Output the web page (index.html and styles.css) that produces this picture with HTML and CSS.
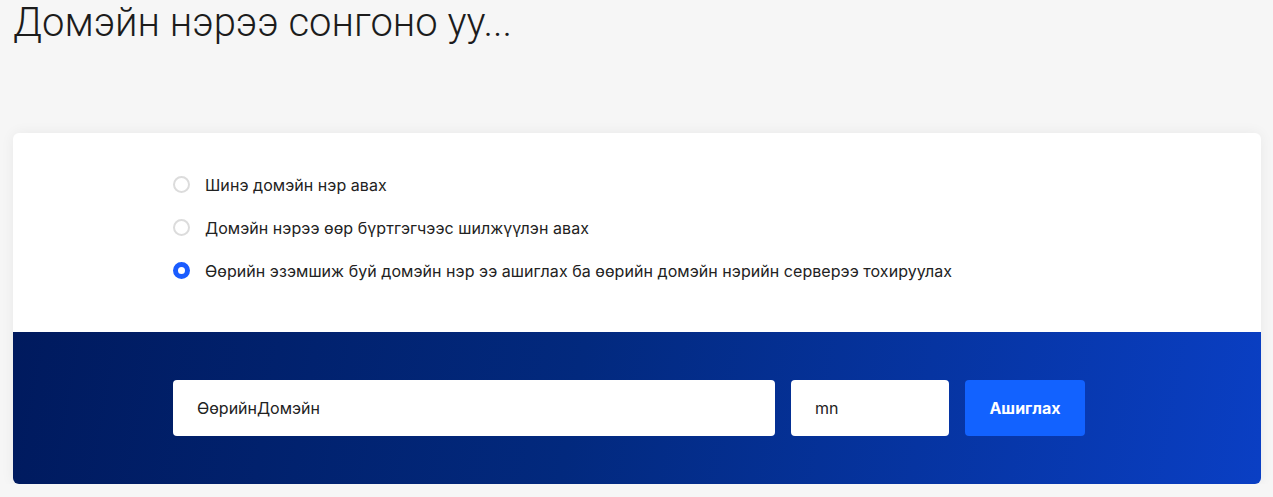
FILE: index.html
```html
<!DOCTYPE html>
<html lang="mn">
<head>
    <meta charset="UTF-8">
    <meta name="viewport" content="width=device-width, initial-scale=1.0">
    <title>Домэйн</title>
    <link rel="stylesheet" href="styles.css">
</head>
<body>
    <h1 class="page-title">Домэйн нэрээ сонгоно уу...</h1>

    <div class="domain-card">
        <div class="options">
            <label class="option">
                <input type="radio" name="domainType" value="new">
                <span>Шинэ домэйн нэр авах</span>
            </label>
            <label class="option">
                <input type="radio" name="domainType" value="transfer">
                <span>Домэйн нэрээ өөр бүртгэгчээс шилжүүлэн авах</span>
            </label>
            <label class="option">
                <input type="radio" name="domainType" value="own" checked>
                <span>Өөрийн эзэмшиж буй домэйн нэр ээ ашиглах ба өөрийн домэйн нэрийн серверээ тохируулах</span>
            </label>
        </div>
        <div class="domain-form">
            <input class="field field-name" type="text" value="ӨөрийнДомэйн">
            <input class="field field-tld" type="text" value="mn">
            <button class="use-btn">Ашиглах</button>
        </div>
    </div>
</body>
</html>
```
FILE: styles.css
```css
body {
    margin: 0;
    padding: 0 12px 0 13px;
    background-color: #f6f6f6;
    font-family: Inter, "Noto Sans", sans-serif;
    color: #222;
}

.page-title {
    margin: 0;
    padding-top: 2px;
    height: 131px;
    font-family: Roboto, sans-serif;
    font-weight: 300;
    font-size: 40px;
    line-height: 42px;
    color: #1c1c1c;
}

.domain-card {
    background-color: #fff;
    border-radius: 6px;
    box-shadow: 0 0 14px rgba(0, 0, 0, 0.06);
    overflow: hidden;
}

.options {
    height: 199px;
    box-sizing: border-box;
    padding: 30px 0 0 160px;
}

.option {
    display: flex;
    align-items: center;
    height: 43px;
    font-size: 16px;
    letter-spacing: 0.05px;
    cursor: pointer;
}

.option input {
    appearance: none;
    -webkit-appearance: none;
    width: 17px;
    height: 17px;
    margin: 0 15px 0 0;
    border: 2px solid #dcdcdc;
    border-radius: 50%;
    box-sizing: border-box;
    background: #fff;
}

.option input:checked {
    border: 5px solid #1a5cff;
}

.domain-form {
    height: 152px;
    box-sizing: border-box;
    padding: 48px 0 0 160px;
    display: flex;
    align-items: flex-start;
    gap: 16px;
    background: linear-gradient(100deg, #001a5e 0%, #02297e 45%, #0a3fc4 100%);
}

.field {
    height: 56px;
    box-sizing: border-box;
    border: none;
    border-radius: 4px;
    padding: 0 24px;
    font-family: inherit;
    font-size: 16px;
    color: #222;
    outline: none;
}

.field-name {
    width: 602px;
}

.field-tld {
    width: 158px;
}

.use-btn {
    width: 120px;
    height: 56px;
    border: none;
    border-radius: 4px;
    background-color: #1262ff;
    color: #fff;
    font-family: inherit;
    font-size: 16px;
    font-weight: 700;
    cursor: pointer;
}
```
